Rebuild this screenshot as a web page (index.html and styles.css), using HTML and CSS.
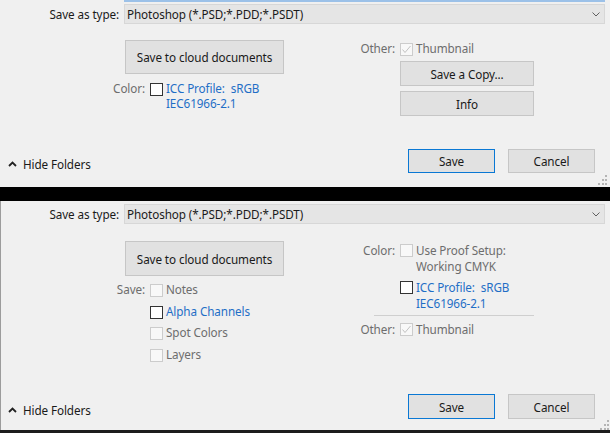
FILE: index.html
```html
<!DOCTYPE html>
<html>
<head>
<meta charset="utf-8">
<link rel="stylesheet" href="styles.css">
</head>
<body>
<div class="panel panel-a">
  <div class="fname-edge"></div>
  <div class="type-row type-row-a">
    <span class="type-label">Save as type:</span>
    <div class="select"><span>Photoshop (*.PSD;*.PDD;*.PSDT)</span>
      <svg class="chev" width="8" height="5" viewBox="0 0 8 5"><polyline points="0.5,0.5 4,4 7.5,0.5" fill="none" stroke="#606060" stroke-width="1"/></svg>
    </div>
  </div>
  <div class="body">
    <div class="col-left">
      <div class="btn cloud-btn cloud-a">Save to cloud documents</div>
      <div class="opt-row opt-first-a">
        <span class="opt-label">Color:</span>
        <span class="cb"></span>
        <span class="link">ICC Profile:&nbsp; sRGB<br>IEC61966-2.1</span>
      </div>
    </div>
    <div class="col-right col-right-a">
      <div class="opt-row">
        <span class="opt-label r-label">Other:</span>
        <span class="cb cb-dis"><svg width="11" height="11" viewBox="0 0 11 11"><polyline points="1.5,5.5 4,8.5 9.5,2" fill="none" stroke="#c2c2c2" stroke-width="1"/></svg></span>
        <span class="dis">Thumbnail</span>
      </div>
      <div class="btn side-btn first-side">Save a Copy...</div>
      <div class="btn side-btn">Info</div>
    </div>
  </div>
  <div class="footer footer-a">
    <div class="hide"><svg width="9" height="6" viewBox="0 0 9 6"><polyline points="1,5 4.5,1.5 8,5" fill="none" stroke="#222" stroke-width="1.8"/></svg><span>Hide Folders</span></div>
    <div class="btn foot-btn save">Save</div>
    <div class="btn foot-btn cancel">Cancel</div>
  </div>
  <svg class="grip grip-a" width="11" height="10" viewBox="0 0 11 10">
    <rect x="8" y="0" width="2" height="2" fill="#b4b4b4"/>
    <rect x="5" y="4" width="2" height="2" fill="#b4b4b4"/><rect x="8" y="4" width="2" height="2" fill="#b4b4b4"/>
    <rect x="1" y="8" width="2" height="2" fill="#b4b4b4"/><rect x="5" y="8" width="2" height="2" fill="#b4b4b4"/><rect x="8" y="8" width="2" height="2" fill="#b4b4b4"/>
  </svg>
</div>
<div class="band"></div>
<div class="panel panel-b">
  <div class="type-row type-row-b">
    <span class="type-label">Save as type:</span>
    <div class="select"><span>Photoshop (*.PSD;*.PDD;*.PSDT)</span>
      <svg class="chev" width="8" height="5" viewBox="0 0 8 5"><polyline points="0.5,0.5 4,4 7.5,0.5" fill="none" stroke="#606060" stroke-width="1"/></svg>
    </div>
  </div>
  <div class="body body-b">
    <div class="col-left">
      <div class="btn cloud-btn cloud-b">Save to cloud documents</div>
      <div class="save-list">
        <div class="opt-row">
          <span class="opt-label">Save:</span>
          <span class="cb cb-dis"></span>
          <span class="dis">Notes</span>
        </div>
        <div class="opt-row">
          <span class="opt-label"></span>
          <span class="cb"></span>
          <span class="link">Alpha Channels</span>
        </div>
        <div class="opt-row">
          <span class="opt-label"></span>
          <span class="cb cb-dis"></span>
          <span class="dis">Spot Colors</span>
        </div>
        <div class="opt-row">
          <span class="opt-label"></span>
          <span class="cb cb-dis"></span>
          <span class="dis">Layers</span>
        </div>
      </div>
    </div>
    <div class="col-right col-right-b">
      <div class="opt-row tall">
        <span class="opt-label r-label">Color:</span>
        <span class="cb cb-dis"></span>
        <span class="dis">Use Proof Setup:<br>Working CMYK</span>
      </div>
      <div class="opt-row tall icc-b">
        <span class="opt-label r-label"></span>
        <span class="cb"></span>
        <span class="link">ICC Profile:&nbsp; sRGB<br>IEC61966-2.1</span>
      </div>
      <div class="sep"></div>
      <div class="opt-row tall other-b">
        <span class="opt-label r-label">Other:</span>
        <span class="cb cb-dis"><svg width="11" height="11" viewBox="0 0 11 11"><polyline points="1.5,5.5 4,8.5 9.5,2" fill="none" stroke="#c2c2c2" stroke-width="1"/></svg></span>
        <span class="dis">Thumbnail</span>
      </div>
    </div>
  </div>
  <div class="footer footer-b">
    <div class="hide"><svg width="9" height="6" viewBox="0 0 9 6"><polyline points="1,5 4.5,1.5 8,5" fill="none" stroke="#222" stroke-width="1.8"/></svg><span>Hide Folders</span></div>
    <div class="btn foot-btn foot-b save">Save</div>
    <div class="btn foot-btn foot-b cancel">Cancel</div>
  </div>
  <svg class="grip grip-b" width="11" height="10" viewBox="0 0 11 10">
    <rect x="8" y="0" width="2" height="2" fill="#b4b4b4"/>
    <rect x="5" y="4" width="2" height="2" fill="#b4b4b4"/><rect x="8" y="4" width="2" height="2" fill="#b4b4b4"/>
    <rect x="1" y="8" width="2" height="2" fill="#b4b4b4"/><rect x="5" y="8" width="2" height="2" fill="#b4b4b4"/><rect x="8" y="8" width="2" height="2" fill="#b4b4b4"/>
  </svg>
</div>
<div class="bottom-edge"></div>
</body>
</html>
```
FILE: styles.css
```css
html, body {
  margin: 0;
  padding: 0;
}
body {
  width: 610px;
  height: 433px;
  overflow: hidden;
  background: #000;
  font-family: "Noto Sans", "Open Sans", sans-serif;
  font-size: 11.7px;
  letter-spacing: -0.1px;
  color: #1a1a1a;
}
.panel {
  position: relative;
  background: #f0f0f0;
  display: flex;
  flex-direction: column;
}
.panel-a {
  height: 187px;
}
.panel-b {
  height: 229px;
  box-shadow: inset 1px 0 0 #9c9c9c;
}
.band {
  height: 14px;
  background: #000;
}
.bottom-edge {
  height: 3px;
  background: #1c1c1c;
}
.fname-edge {
  margin-left: 124px;
  width: 481px;
  height: 2px;
  background: #9cc1e8;
}
.type-row {
  display: flex;
  align-items: center;
  height: 20px;
}
.type-row-a {
  margin-top: 2px;
}
.type-row-b {
  margin-top: 3px;
}
.type-label {
  width: 119px;
  margin-right: 5px;
  text-align: right;
}
.select {
  box-sizing: border-box;
  width: 481px;
  height: 20px;
  background: #e5e5e5;
  border: 1px solid #d7d7d7;
  display: flex;
  align-items: center;
  justify-content: space-between;
  padding-left: 2px;
  padding-right: 4px;
}
.body {
  display: flex;
  margin-top: 16px;
}
.body-b {
  margin-top: 17px;
}
.col-left {
  width: 247px;
  margin-left: 108px;
  display: flex;
  flex-direction: column;
}
.col-right {
  display: flex;
  flex-direction: column;
  padding-top: 1px;
}
.btn {
  box-sizing: border-box;
  background: #e1e1e1;
  border: 1px solid #c6c6c6;
  display: flex;
  align-items: center;
  justify-content: center;
  color: #1a1a1a;
}
.cloud-btn {
  margin-left: 17px;
  width: 159px;
  height: 34px;
}
.cloud-b {
  height: 35px;
}
.opt-row {
  display: flex;
  align-items: flex-start;
  line-height: 15px;
}
.opt-row.tall {
  line-height: 16px;
}
.opt-first-a {
  margin-top: 7px;
}
.opt-label {
  width: 37px;
  margin-right: 5px;
  text-align: right;
  color: #6d6d6d;
  flex-shrink: 0;
}
.r-label {
  width: 40px;
}
.cb {
  box-sizing: border-box;
  width: 13px;
  height: 13px;
  margin-top: 2px;
  margin-right: 3px;
  border: 1px solid #333;
  background: #fff;
  flex-shrink: 0;
  display: flex;
}
.cb-dis {
  border-color: #cccccc;
  background: #f8f8f8;
}
.link {
  color: #1f6ec6;
}
.dis {
  color: #6d6d6d;
}
.side-btn {
  margin-left: 45px;
  width: 134px;
  height: 25px;
  margin-top: 5px;
}
.save-list {
  margin-top: 6px;
  display: flex;
  flex-direction: column;
  gap: 6.5px;
}
.icc-b {
  margin-top: 5px;
}
.sep {
  margin-top: 4px;
  margin-left: 19px;
  width: 160px;
  height: 1px;
  background: #cfcfcf;
}
.other-b {
  margin-top: 5px;
}
.footer {
  margin-top: auto;
  display: flex;
  align-items: center;
  padding-left: 8px;
  padding-right: 15px;
}
.footer-a {
  padding-bottom: 14px;
}
.footer-b {
  padding-bottom: 11px;
}
.hide {
  display: flex;
  align-items: center;
  gap: 6px;
  margin-right: auto;
  margin-top: 6px;
}
.foot-btn {
  width: 87px;
  height: 24px;
}
.foot-b {
  height: 25px;
}
.save {
  border-color: #0a78d4;
}
.cancel {
  margin-left: 13px;
}
.grip {
  position: absolute;
}
.grip-a {
  right: 2px;
  bottom: 2px;
}
.grip-b {
  right: 0;
  bottom: 0;
}
```
